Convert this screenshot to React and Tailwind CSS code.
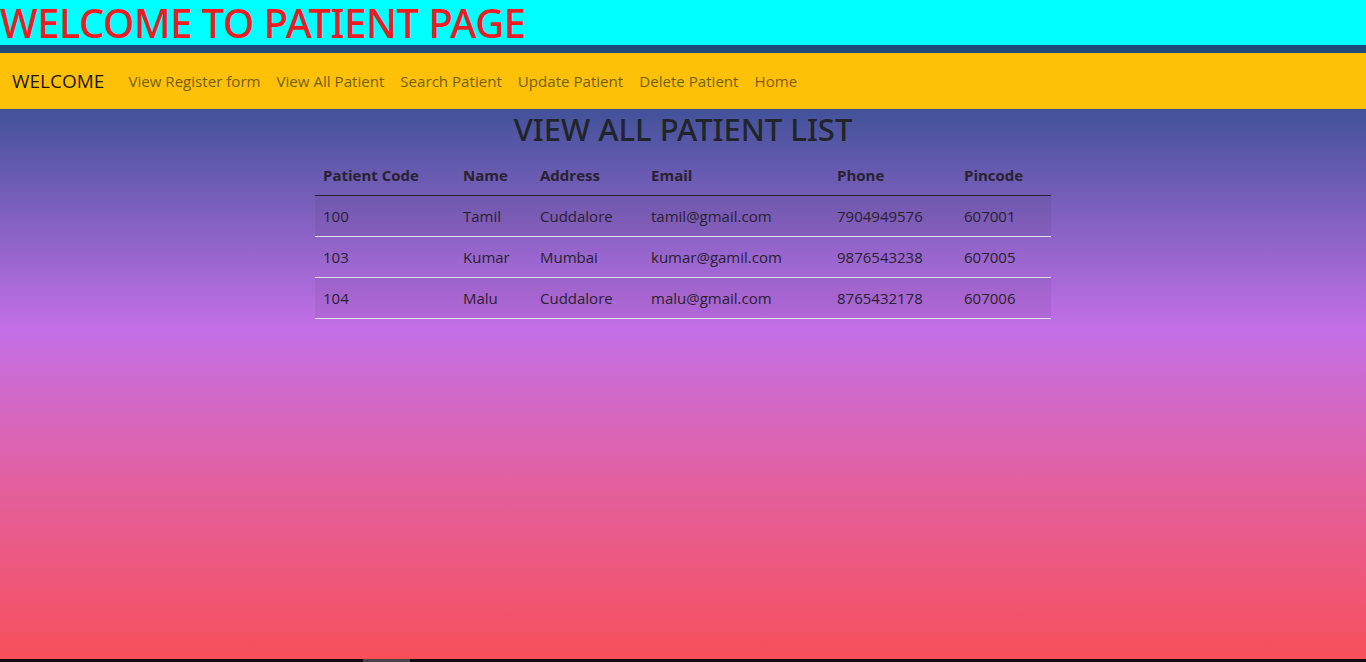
import React from 'react';

const patients = [
    { code: '100', name: 'Tamil', address: 'Cuddalore', email: 'tamil@gmail.com', phone: '7904949576', pincode: '607001' },
    { code: '103', name: 'Kumar', address: 'Mumbai', email: 'kumar@gamil.com', phone: '9876543238', pincode: '607005' },
    { code: '104', name: 'Malu', address: 'Cuddalore', email: 'malu@gmail.com', phone: '8765432178', pincode: '607006' },
];

const links = ['View Register form', 'View All Patient', 'Search Patient', 'Update Patient', 'Delete Patient'];

function App() {
    return (
        <div className="flex flex-col h-[662px] overflow-hidden font-['Open_Sans','Noto_Sans',sans-serif]">
            {/* Title bar */}
            <div className="h-[45px] bg-[#00ffff] flex items-center">
                <h1 className="text-[40px] leading-[45px] font-medium font-['Noto_Sans',sans-serif] text-[#ed1c24] tracking-[-0.5px]">WELCOME TO PATIENT PAGE</h1>
            </div>
            <div className="h-2 bg-[#1f4a7c]" />

            {/* Navbar */}
            <nav className="h-14 bg-[#ffc107] flex items-center px-3">
                <span className="text-[19px] text-black/90 mr-4">WELCOME</span>
                {links.map((l) => (
                    <span key={l} className="px-2 text-[15.1px] text-[#736004]">{l}</span>
                ))}
                <span className="px-2 text-[15.1px] text-[#8a5a0e]">Home</span>
            </nav>

            {/* Body */}
            <div className="flex-1 bg-[linear-gradient(180deg,#42529a_0%,#c36fe7_40%,#e3609f_68%,#f74f5a_100%)] flex flex-col items-center">
                <h2 className="text-[31px] leading-[40px] text-[#212529] font-medium font-['Noto_Sans',sans-serif]">VIEW ALL PATIENT LIST</h2>
                <table className="w-[736px] text-[15px] text-[#2a2130] border-collapse mt-[6px]">
                    <thead>
                        <tr className="border-b border-[#212529] text-left">
                            <th className="w-[140px] h-[40px] px-2 font-bold">Patient Code</th>
                            <th className="w-[77px] px-2 font-bold">Name</th>
                            <th className="w-[111px] px-2 font-bold">Address</th>
                            <th className="w-[186px] px-2 font-bold">Email</th>
                            <th className="w-[127px] px-2 font-bold">Phone</th>
                            <th className="px-2 font-bold">Pincode</th>
                        </tr>
                    </thead>
                    <tbody>
                        {patients.map((p, i) => (
                            <tr key={p.code} className={`border-b border-[#dee2e6] ${i % 2 === 0 ? 'bg-black/5' : ''}`}>
                                <td className="h-[41px] px-2 pt-[2px]">{p.code}</td>
                                <td className="px-2 pt-[2px]">{p.name}</td>
                                <td className="px-2 pt-[2px]">{p.address}</td>
                                <td className="px-2 pt-[2px]">{p.email}</td>
                                <td className="px-2 pt-[2px]">{p.phone}</td>
                                <td className="px-2 pt-[2px]">{p.pincode}</td>
                            </tr>
                        ))}
                    </tbody>
                </table>
            </div>

            {/* bottom strip */}
            <div className="h-[3px] bg-[#110d0d] flex">
                <div className="w-[363px]" />
                <div className="w-[47px] bg-[#444]" />
            </div>
        </div>
    );
}

export default App;
